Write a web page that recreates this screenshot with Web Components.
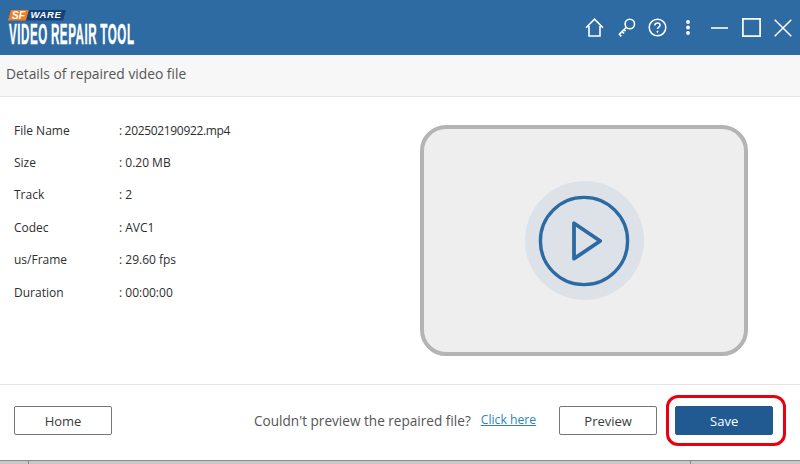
<!DOCTYPE html>
<html><head><meta charset="utf-8"><style>
html,body{margin:0;padding:0;width:800px;height:464px;overflow:hidden;background:#fff}
body{font-family:"Open Sans","Noto Sans",sans-serif}
</style></head><body>
<app-shell>
<app-header></app-header>
<sub-title>Details of repaired video file</sub-title>
<detail-pane>
  <info-row label="File Name" value="202502190922.mp4" tight></info-row>
  <info-row label="Size" value="0.20 MB"></info-row>
  <info-row label="Track" value="2"></info-row>
  <info-row label="Codec" value="AVC1"></info-row>
  <info-row label="us/Frame" value="29.60 fps"></info-row>
  <info-row label="Duration" value="00:00:00"></info-row>
</detail-pane>
<app-footer></app-footer>
<bottom-bar></bottom-bar>
</app-shell>
<script>
function def(name,html){customElements.define(name,class extends HTMLElement{connectedCallback(){if(this.shadowRoot)return;const s=this.attachShadow({mode:'open'});s.innerHTML=typeof html==='function'?html(this):html;}})}
def('app-shell',`<style>:host{display:flex;flex-direction:column;width:800px;height:464px;overflow:hidden}</style><slot></slot>`);
def('app-logo',`<style>
:host{display:flex;flex-direction:column;width:128px;height:36px}
.top{display:flex;height:10.500px}
.sf{background:#ee7d22;color:#fff;font:italic bold 10.5px/10.5px "Liberation Sans",sans-serif;width:21px;text-align:center;clip-path:polygon(3px 0,100% 0,calc(100% - 3px) 100%,0 100%)}
.ware{background:#15427a;color:#fff;font:italic bold 9.5px/10.5px "Liberation Sans",sans-serif;width:40px;text-align:center;margin-left:-3px;letter-spacing:.6px;clip-path:polygon(3px 0,100% 0,calc(100% - 3px) 100%,0 100%)}
.main{color:#fff;font:bold 29.5px/22px "Liberation Sans",sans-serif;-webkit-text-stroke:.4px #fff;letter-spacing:1.4px;word-spacing:-2px;white-space:nowrap;transform-origin:0 0;transform:scaleX(.394);margin:2.500px 0 0 1px;height:22px}
</style><div class="top"><span class="sf">SF</span><span class="ware">WARE</span></div><div class="main">VIDEO REPAIR TOOL</div>`);
def('app-header',`<style>
:host{display:flex;flex:none;height:55px;background:#2f6ba3;box-sizing:border-box;padding:10px 0 0 8px;align-items:flex-start;justify-content:space-between}
.icons{display:flex;align-items:center;margin-top:8px}
svg{display:block;fill:none;stroke:#fff;flex:none}
</style>
<app-logo></app-logo>
<div class="icons">
<svg width="19" height="19" viewBox="0 0 19 19" stroke-width="1.6" style="margin-right:13px"><path d="M1 9.700 9.500 1.200 18 9.700M4 8v10h11V8"/></svg>
<svg width="19" height="19" viewBox="0 0 19 19" stroke-width="1.6" style="margin-right:12px"><circle cx="12.800" cy="6" r="4.700"/><path d="M9.300 9.300 2 16.600M1.800 15.800l2.600 2.600M4.700 13.100l2.400 2.400M7 11.600l1.500 1.500"/></svg>
<svg width="19" height="19" viewBox="0 0 19 19" stroke-width="1.5" style="margin-right:19px"><circle cx="9.500" cy="9.500" r="8.300"/><path d="M6.800 7.500c0-1.600 1.200-2.500 2.700-2.500s2.600.9 2.600 2.200c0 1.900-2.600 1.900-2.600 3.800"/><circle cx="9.500" cy="13.700" r=".7" fill="#fff" stroke-width=".6"/></svg>
<svg width="4" height="15" viewBox="0 0 4 15" style="margin-right:21px;stroke:none;fill:#fff"><circle cx="2" cy="2" r="1.900"/><circle cx="2" cy="7.500" r="1.900"/><circle cx="2" cy="13" r="1.900"/></svg>
<svg width="17" height="2" viewBox="0 0 17 2" stroke-width="1.6" style="margin-right:14px"><path d="M0 1h17"/></svg>
<svg width="19" height="19" viewBox="0 0 19 19" stroke-width="1.7" style="margin-right:13px"><rect x=".9" y=".9" width="17.200" height="17.200"/></svg>
<svg width="18" height="18" viewBox="0 0 18 18" stroke-width="1.5" style="margin-right:8px"><path d="M.7.7l16.600 16.600M17.300.7.700 17.300"/></svg>
</div>`);
def('sub-title',`<style>
:host{display:flex;flex:none;align-items:center;height:42px;box-sizing:border-box;padding:0 0 4px 6px;background:#f7f7f7;border-bottom:1px solid #e4e4e4;color:#555;font-size:13.8px}
</style><slot></slot>`);
def('info-row',h=>`<style>
:host{display:grid;grid-template-columns:105px auto;height:32.4px;align-items:center;font-size:12px;color:#2e2e2e}
.t{letter-spacing:-.33px}
</style><span>${h.getAttribute('label')}</span><span class="${h.hasAttribute('tight')?'t':''}">: ${h.getAttribute('value')}</span>`);
def('video-placeholder',`<style>
:host{display:flex;align-items:center;justify-content:center;width:328px;height:231px;box-sizing:border-box;border:4px solid #b4b4b4;border-radius:26px;background:#eeeeee}
.halo{display:flex;align-items:center;justify-content:center;width:119px;height:119px;border-radius:50%;background:#dde2e9}
svg{display:block}
</style><div class="halo"><svg width="92" height="92" viewBox="0 0 92 92" fill="none" stroke="#2c6aa3"><circle cx="46" cy="46" r="43.600" stroke-width="3.400"/><path d="M36 28.300V63.700L62.200 46Z" stroke-width="3.800" stroke-linejoin="round"/></svg></div>`);
def('detail-pane',`<style>
:host{display:flex;flex:none;height:288px;box-sizing:border-box;border-bottom:1px solid #e4e4e4;justify-content:space-between;padding:17px 52px 0 14px}
.rows{display:flex;flex-direction:column}
video-placeholder{margin-top:11px}
</style><div class="rows"><slot></slot></div><video-placeholder></video-placeholder>`);
def('app-button',`<style>
:host{display:flex;flex:none;align-items:center;justify-content:center;box-sizing:border-box;width:98px;height:29px;border:1px solid #767676;border-radius:2px;background:#fff;color:#3c3c3c;font-size:13px;font-weight:500}
:host([primary]){background:#215a90;border-color:#215a90;color:#fff}
</style><slot></slot>`);
def('app-footer',`<style>
:host{display:flex;flex:none;height:75px;box-sizing:border-box;align-items:center;padding:0 27px 4px 14px;position:relative}
.q{margin-left:142px;font-size:13.6px;color:#555;white-space:nowrap}
a{margin-left:10px;font-size:12.2px;color:#2f82c0;text-decoration:underline;white-space:nowrap;margin-top:-2px}
.p{margin-left:23px}
.s{margin-left:18px}
.ring{position:absolute;left:666px;top:10px;width:119.500px;height:51px;box-sizing:border-box;border:3px solid #e8000f;border-radius:12px}
</style><app-button>Home</app-button><span class="q">Couldn't preview the repaired file?</span><a>Click here</a><app-button class="p">Preview</app-button><app-button class="s" primary>Save</app-button><div class="ring"></div>`);
def('bottom-bar',`<style>
:host{display:flex;flex:none;height:4px;box-sizing:border-box;background:#c8c8c8;border-top:1px solid #8a8a8a;padding-left:28px}
i{display:block;width:1px;background:#8a8a8a}
i+i{margin-left:661px}
</style><i></i><i></i>`);
</script>
</body></html>
